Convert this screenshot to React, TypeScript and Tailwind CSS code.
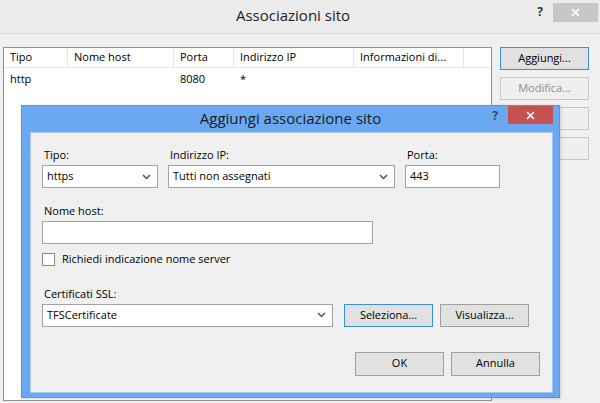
import React from "react"

const font = "font-['Segoe_UI','Open_Sans',sans-serif]"

const Chevron = () => (
	<svg width="9" height="6" viewBox="0 0 9 6" className="shrink-0">
		<polyline points="1,1 4.5,4.5 8,1" fill="none" stroke="#505050" strokeWidth="1.5" />
	</svg>
)

const CloseX = () => (
	<svg width="9" height="9" viewBox="0 0 9 9">
		<path d="M1 1 L8 8 M8 1 L1 8" stroke="#fff" strokeWidth="1.6" />
	</svg>
)

const Select = ({ value, w }: { value: string; w: string }) => (
	<div className={`${w} h-[23px] bg-white border border-[#a2a2a2] flex items-center pl-[4px] pr-[6px] justify-between`}>
		<span className="text-[11px] text-black">{value}</span>
		<Chevron />
	</div>
)

const Field = ({ label, children }: { label: string; children: React.ReactNode }) => (
	<div className="flex flex-col">
		<span className="text-[11px] leading-[16px] pl-[2px] mb-[2px] text-black">{label}</span>
		{children}
	</div>
)

const Btn = ({
	label,
	focused,
	disabled,
	h = "h-[23px]",
}: {
	label: string
	focused?: boolean
	disabled?: boolean
	h?: string
}) => (
	<div
		className={`w-[89px] ${h} flex items-center justify-center text-[11px] border ${
			disabled
				? "bg-[#efefef] border-[#c9c9c9] text-[#8d8d8d]"
				: focused
				? "bg-[#e1e1e1] border-[#3c8fd6] text-black"
				: "bg-[#e1e1e1] border-[#a0a0a0] text-black"
		}`}
	>
		{label}
	</div>
)

const columns = [
	{ name: "Tipo", w: "w-[64px]" },
	{ name: "Nome host", w: "w-[106px]" },
	{ name: "Porta", w: "w-[60px]" },
	{ name: "Indirizzo IP", w: "w-[120px]" },
	{ name: "Informazioni di...", w: "w-[110px]" },
]

export default function App() {
	return (
		<div className={`relative w-[600px] h-[403px] bg-[#f0f0f0] overflow-hidden ${font}`}>
			{/* outer title bar */}
			<div className="relative h-[34px] bg-[#ebebeb] border-b border-[#d9d9d9] flex items-center justify-center">
				<span className="text-[15px] text-[#222] pr-[14px] pb-[2px]">Associazioni sito</span>
				<div className="absolute right-[2px] top-[3px] flex items-start gap-[10px]">
					<span className="text-[12px] font-bold text-[#333] leading-[16px] mt-[1px]">?</span>
					<div className="w-[45px] h-[19px] bg-[#c7c7c7] flex items-center justify-center">
						<CloseX />
					</div>
				</div>
			</div>

			{/* outer body */}
			<div className="flex pl-[3px] pt-[13px] gap-[8px]">
				<div className="w-[489px] h-[354px] bg-white border border-[#8f9196]">
					<div className="flex h-[20px] border-b border-[#e5e5e5]">
						{columns.map((c) => (
							<div
								key={c.name}
								className={`${c.w} border-r border-[#e5e5e5] flex items-center pl-[6px] text-[11px] text-black`}
							>
								{c.name}
							</div>
						))}
					</div>
					<div className="flex h-[22px] items-center text-[11px] text-black">
						<span className="w-[64px] pl-[6px]">http</span>
						<span className="w-[106px]"></span>
						<span className="w-[60px] pl-[6px]">8080</span>
						<span className="pl-[6px]">*</span>
					</div>
				</div>
				<div className="flex flex-col gap-[7px]">
					<Btn label="Aggiungi..." focused />
					<Btn label="Modifica..." disabled />
					<Btn label="" disabled />
					<Btn label="" disabled />
				</div>
			</div>

			{/* dialog */}
			<div className="absolute left-[21px] top-[105px] w-[539px] h-[293px] bg-[#6aa9f2] border border-[#5b95da] flex flex-col shadow-[1px_1px_3px_rgba(0,0,0,0.15)]">
				<div className="relative h-[26px] flex items-center justify-center">
					<span className="text-[15px] text-[#1a1a1a] pb-[1px]">Aggiungi associazione sito</span>
					<div className="absolute right-[6px] top-0 flex items-start gap-[10px]">
						<span className="text-[12px] font-bold text-[#2a4a70] leading-[16px] mt-[2px]">?</span>
						<div className="w-[45px] h-[18px] bg-[#c75050] flex items-center justify-center">
							<CloseX />
						</div>
					</div>
				</div>
				<div className="flex-1 ml-[8px] mr-[6px] mb-[4px] bg-[#f0f0f0] border border-[#a8c6ea] px-[11px] pt-[14px] flex flex-col">
					<div className="flex">
						<Field label="Tipo:">
							<Select value="https" w="w-[116px]" />
						</Field>
						<div className="ml-[10px]">
							<Field label="Indirizzo IP:">
								<Select value="Tutti non assegnati" w="w-[227px]" />
							</Field>
						</div>
						<div className="ml-[10px]">
							<Field label="Porta:">
								<div className="w-[95px] h-[23px] bg-white border border-[#a2a2a2] flex items-center pl-[4px] text-[11px] text-black">
									443
								</div>
							</Field>
						</div>
					</div>

					<div className="mt-[15px]">
						<Field label="Nome host:">
							<div className="w-[331px] h-[23px] bg-white border border-[#a2a2a2]"></div>
						</Field>
					</div>

					<div className="mt-[7px] flex items-center gap-[7px]">
						<div className="w-[13px] h-[13px] bg-white border border-[#8a8a8a]"></div>
						<span className="text-[11px] text-black">Richiedi indicazione nome server</span>
					</div>

					<div className="mt-[18px]">
						<Field label="Certificati SSL:">
							<div className="flex items-center">
								<Select value="TFSCertificate" w="w-[291px]" />
								<div className="ml-[11px]">
									<Btn label="Seleziona..." focused />
								</div>
								<div className="ml-[7px]">
									<Btn label="Visualizza..." />
								</div>
							</div>
						</Field>
					</div>

					<div className="mt-[25px] flex justify-end gap-[7px] pr-[1px]">
						<Btn label="OK" h="h-[24px]" />
						<Btn label="Annulla" h="h-[24px]" />
					</div>
				</div>
			</div>
		</div>
	)
}
